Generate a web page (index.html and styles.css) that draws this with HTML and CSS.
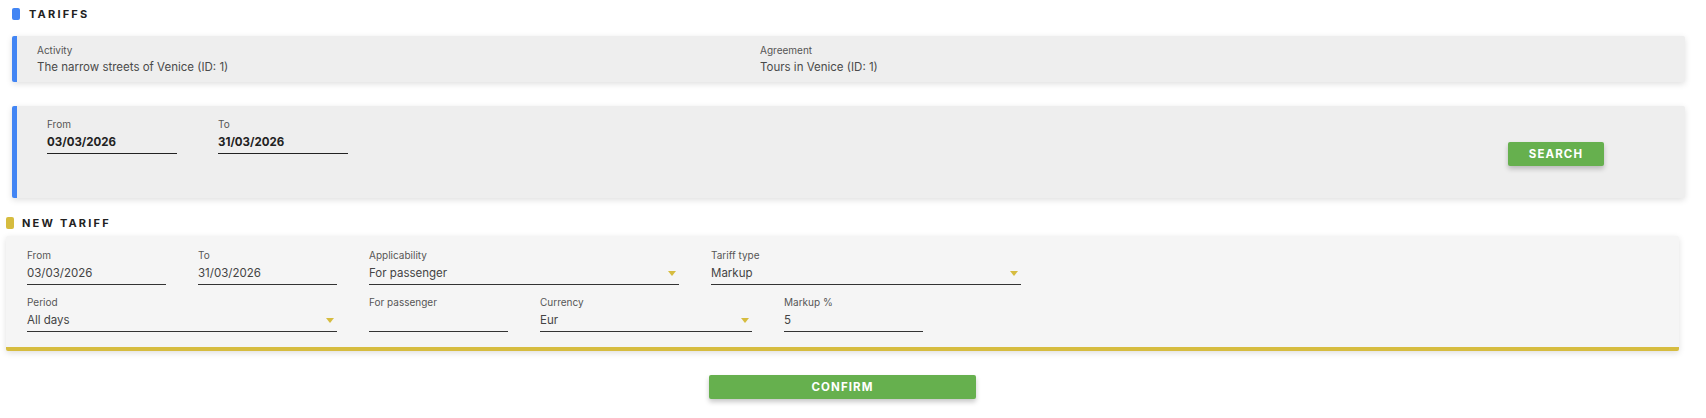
FILE: index.html
```html
<!DOCTYPE html>
<html lang="en">
<head>
<meta charset="utf-8">
<title>Tariffs</title>
<link rel="stylesheet" href="styles.css">
</head>
<body>
<div class="page">
  <div class="section-title title-blue"><span class="mark"></span><span class="title-text">TARIFFS</span></div>

  <div class="card card-info">
    <div class="info-col info-col-first">
      <div class="lbl">Activity</div>
      <div class="val">The narrow streets of Venice (ID: 1)</div>
    </div>
    <div class="info-col">
      <div class="lbl">Agreement</div>
      <div class="val">Tours in Venice (ID: 1)</div>
    </div>
  </div>

  <div class="card card-search">
    <div class="search-fields">
      <div class="sfield">
        <div class="lbl">From</div>
        <div class="sinput">03/03/2026</div>
      </div>
      <div class="sfield">
        <div class="lbl">To</div>
        <div class="sinput">31/03/2026</div>
      </div>
    </div>
    <div class="search-action">
      <button class="btn btn-search">SEARCH</button>
    </div>
  </div>

  <div class="section-title title-yellow"><span class="mark"></span><span class="title-text">NEW TARIFF</span></div>

  <div class="card card-new">
    <div class="frow">
      <div class="field w1">
        <div class="lbl">From</div>
        <div class="input">03/03/2026</div>
      </div>
      <div class="field w1">
        <div class="lbl">To</div>
        <div class="input">31/03/2026</div>
      </div>
      <div class="field w2">
        <div class="lbl">Applicability</div>
        <div class="input select">For passenger<span class="caret"></span></div>
      </div>
      <div class="field w2">
        <div class="lbl">Tariff type</div>
        <div class="input select">Markup<span class="caret"></span></div>
      </div>
    </div>
    <div class="frow">
      <div class="field w2">
        <div class="lbl">Period</div>
        <div class="input select">All days<span class="caret"></span></div>
      </div>
      <div class="field w1">
        <div class="lbl">For passenger</div>
        <div class="input"></div>
      </div>
      <div class="field wcur">
        <div class="lbl">Currency</div>
        <div class="input select">Eur<span class="caret"></span></div>
      </div>
      <div class="field w1">
        <div class="lbl">Markup %</div>
        <div class="input">5</div>
      </div>
    </div>
  </div>

  <div class="confirm-row">
    <button class="btn btn-confirm">CONFIRM</button>
  </div>
</div>
</body>
</html>
```

FILE: styles.css
```css
html, body {
  margin: 0;
  padding: 0;
  background: #ffffff;
}
body {
  font-family: Inter, "Noto Sans", "DejaVu Sans", sans-serif;
  color: #4a4a4a;
  width: 1706px;
  height: 418px;
  overflow: hidden;
}
.page {
  padding-top: 7px;
}
.section-title {
  display: flex;
  align-items: center;
  height: 14px;
}
.title-blue {
  margin-left: 12px;
  gap: 9px;
}
.title-yellow {
  margin-left: 6px;
  gap: 8px;
  margin-top: 18px;
}
.mark {
  width: 8px;
  height: 12px;
  border-radius: 2px;
  display: block;
}
.title-blue .mark { background: #4285f4; }
.title-yellow .mark { background: #d6bc3f; }
.title-text {
  font-size: 11px;
  font-weight: 700;
  letter-spacing: 2.2px;
  color: #222;
}
.card {
  box-shadow: 0 2px 6px rgba(0,0,0,0.13);
  border-radius: 2px;
}
.card-info {
  margin: 15px 21px 0 12px;
  height: 46px;
  box-sizing: border-box;
  background: #eeeeee;
  border-left: 5px solid #4285f4;
  display: flex;
  padding: 8px 0 0 20px;
}
.info-col-first {
  width: 723px;
}
.lbl {
  font-size: 10px;
  color: #555;
  line-height: 12px;
}
.val {
  font-size: 11.5px;
  color: #4a4a4a;
  margin-top: 4px;
  line-height: 14px;
}
.card-search {
  margin: 24px 21px 0 12px;
  height: 92px;
  box-sizing: border-box;
  background: #eeeeee;
  border-left: 5px solid #4285f4;
  display: flex;
  justify-content: space-between;
  padding: 12px 81px 0 30px;
}
.search-fields {
  display: flex;
  gap: 41px;
}
.sfield { width: 130px; }
.sinput {
  margin-top: 5px;
  font-size: 11.5px;
  font-weight: 700;
  color: #222;
  line-height: 14px;
  padding-bottom: 4px;
  border-bottom: 1.5px solid #222;
}
.search-action {
  padding-top: 24px;
}
.btn {
  font-family: inherit;
  border: none;
  color: #fff;
  font-weight: 700;
  font-size: 11.5px;
  letter-spacing: 1.1px;
  background: #66b04e;
  border-radius: 2px;
  box-shadow: 0 3px 5px rgba(0,0,0,0.22);
  height: 24px;
  padding: 0;
}
.btn-search { width: 96px; }
.card-new {
  margin: 6px 27px 0 6px;
  background: #f5f5f5;
  border-bottom: 4px solid #d6bc3f;
  box-sizing: border-box;
  height: 115px;
  padding: 13px 0 0 21px;
  display: flex;
  flex-direction: column;
  gap: 11px;
}
.frow {
  display: flex;
  gap: 32px;
}
.field.w1 { width: 139px; }
.field.w2 { width: 310px; }
.field.wcur { width: 212px; }
.input {
  margin-top: 5px;
  font-size: 11.5px;
  color: #444;
  line-height: 14px;
  height: 14px;
  padding-bottom: 4px;
  border-bottom: 1.5px solid #333;
  display: flex;
  justify-content: space-between;
  align-items: center;
}
.caret {
  width: 0;
  height: 0;
  border-left: 4px solid transparent;
  border-right: 4px solid transparent;
  border-top: 5px solid #d6bc3f;
  margin-right: 3px;
}
.confirm-row {
  display: flex;
  padding-left: 709px;
  margin-top: 24px;
}
.btn-confirm { width: 267px; }
```
